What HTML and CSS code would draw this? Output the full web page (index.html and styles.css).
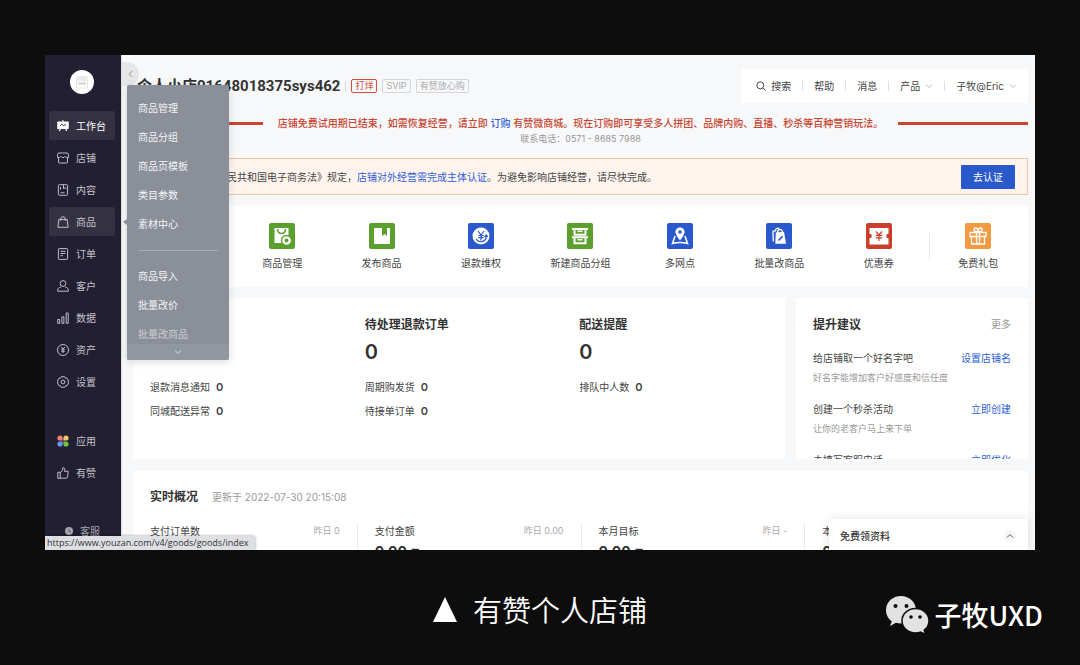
FILE: index.html
```html
<!DOCTYPE html>
<html lang="zh-CN">
<head>
<meta charset="utf-8">
<meta name="viewport" content="width=device-width, initial-scale=1">
<title>有赞个人店铺</title>
<link rel="stylesheet" href="styles.css">
</head>
<body>
<div class="window">
  <aside class="sidebar">
    <div class="logo"><svg width="14" height="14" viewBox="0 0 14 14"><path d="M2 1h10l1.500 5H.5z" fill="#e9e9e9"/><path d="M1.500 6v7h11V6" fill="none" stroke="#e6e6e6"/><path d="M3 7h8v3H3z" fill="#dedede"/></svg></div>
    <nav class="menu">
      <a class="item active" href="#"><svg class="ico" viewBox="0 0 12 12"><path d="M1 1.500h10q.8 0 .8.800v5.900q0 .8-.8.800H1q-.8 0-.8-.8V2.300q0-.8.800-.8z" fill="#fff"/><path d="M6 .3v2M3.500 8.500 2.300 11M8.500 8.500 9.700 11" stroke="#fff" stroke-width="1.300"/><path d="M3 5.800 4.800 4.300l1.600 1.400L9 4.500" stroke="#221f33" stroke-width=".9" fill="none"/></svg>工作台</a>
      <a class="item" href="#"><svg class="ico" viewBox="0 0 12 12"><path d="M.6 5.500V2.200Q.6 1 1.800 1h8.400q1.200 0 1.200 1.200v3.300M.6 5.500h2l1.200-1.200L5 5.500h2l1.200-1.200 1.200 1.200h2M1.500 5.500v4.600q0 .9.900.9h7.200q.9 0 .9-.9V5.500"/></svg>店铺</a>
      <a class="item" href="#"><svg class="ico" viewBox="0 0 12 12"><path d="M2.300.7h7.400q.9 0 .9.900v8.800q0 .9-.9.900H2.300q-.9 0-.9-.9V1.600q0-.9.900-.9zM6.500.7v4l1.600-1 1.500 1M3.500 3v2.500M3.500 8.800h4"/></svg>内容</a>
      <a class="item hover" href="#"><svg class="ico" viewBox="0 0 12 12"><path d="M1.800 3.400h8.400l.9 7.900H.9zM3.700 5V3a2.300 2.300 0 0 1 4.600 0v2"/></svg>商品</a>
      <a class="item" href="#"><svg class="ico" viewBox="0 0 12 12"><path d="M2.100.6h7.800q.7 0 .7.700v9.400q0 .7-.7.700H2.100q-.7 0-.7-.7V1.300q0-.7.7-.7zM3.500 3.300h5M3.500 5.500h5M3.500 7.700H6"/></svg>订单</a>
      <a class="item" href="#"><svg class="ico" viewBox="0 0 12 12"><circle cx="6" cy="3.500" r="2.900"/><path d="M3.800 7.200C1.500 7.400.6 8.700.6 11.200h10.800c0-2.500-.9-3.800-3.200-4"/></svg>客户</a>
      <a class="item" href="#"><svg class="ico" viewBox="0 0 12 12"><path d="M.7 7.400h2v3.900h-2zM4.900 4.800h2v6.500h-2zM9.200 1h2v10.300h-2z"/></svg>数据</a>
      <a class="item" href="#"><svg class="ico" viewBox="0 0 12 12"><circle cx="6" cy="6" r="5.500"/><path d="m4.300 3 1.700 2.400L7.700 3M6 5.400V9M4.300 5.700h3.400M4.300 7.300h3.400"/></svg>资产</a>
      <a class="item" href="#"><svg class="ico" viewBox="0 0 12 12"><path d="M4.300.7h3.400l.7 1.400 1.600.1 1.600 2.900-.5.900.5.900-1.600 2.900-1.600.1-.7 1.400H4.300l-.7-1.400L2 9.800.4 6.900 1 6l-.6-.9L2 2.200l1.600-.1z"/><circle cx="6" cy="6" r="1.900"/></svg>设置</a>
    </nav>
    <nav class="menu extra">
      <a class="item" href="#"><svg class="ico solid" viewBox="0 0 12 12"><path d="M5.600 5.600H3A2.600 2.600 0 1 1 5.600 3z" fill="#f0836f"/><path d="M6.400 5.600V3A2.600 2.600 0 1 1 9 5.600z" fill="#f5c66a"/><path d="M5.600 6.400V9A2.600 2.600 0 1 1 3 6.400z" fill="#6d94f5"/><path d="M6.400 6.400H9A2.600 2.600 0 1 1 6.400 9z" fill="#6cc644"/></svg>应用</a>
      <a class="item" href="#"><svg class="ico" viewBox="0 0 12 12"><path d="M.8 5.300h2.400v6H.8zM3.200 5.500 5.500 3.600 5.800.8c1.700-.5 2.400 1 1.700 3.500h3.700l-.7 6q-.2.900-1.200.9H3.200"/></svg>有赞</a>
    </nav>
    <a class="service" href="#"><svg width="8" height="8" viewBox="0 0 8 8"><circle cx="4" cy="4" r="4" fill="#a5a4ad"/><path d="M4 1.800V4.300h2" fill="none" stroke="#55535f" stroke-width=".8"/></svg>客服</a>
  </aside>

  <main class="main">
    <header class="top">
      <div class="shop">
        <h1>个人小店01648018375sys462</h1>
        <span class="bar"></span>
        <span class="tag red">打烊</span><span class="tag">SVIP</span><span class="tag">有赞放心购</span>
      </div>
      <nav class="tools">
        <a href="#"><svg width="10" height="10" viewBox="0 0 10 10" class="line"><circle cx="4.300" cy="4.300" r="3.500"/><path d="m7 7 2.500 2.500"/></svg>搜索</a>
        <a href="#">帮助</a>
        <a href="#">消息</a>
        <a href="#">产品<svg width="8" height="8" viewBox="0 0 8 8" class="chev"><path d="m1 2.500 3 3 3-3"/></svg></a>
        <a href="#">子牧@Eric<svg width="8" height="8" viewBox="0 0 8 8" class="chev"><path d="m1 2.500 3 3 3-3"/></svg></a>
      </nav>
    </header>

    <section class="expired">
      <p class="notice">店铺免费试用期已结束，如需恢复经营，请立即 <a href="#">订购</a> 有赞微商城。现在订购即可享受多人拼团、品牌内购、直播、秒杀等百种营销玩法。</p>
      <p class="phone">联系电话：0571 - 8685 7988</p>
    </section>

    <section class="verify">
      <p>根据《中华人民共和国电子商务法》规定，<a href="#">店铺对外经营需完成主体认证</a>。为避免影响店铺经营，请尽快完成。</p>
      <button type="button">去认证</button>
    </section>

    <nav class="card shortcuts">
      <a href="#"><svg class="app green" viewBox="0 0 26 26"><path d="M5.500 5h14v15h-14z" fill="#fff"/><path d="M8.500 6c.2 6 7.800 6 8 0" fill="none" stroke="#5b9f2e" stroke-width="1.500"/><circle cx="17.500" cy="17.500" r="5" fill="#fff" stroke="#5b9f2e" stroke-width="1.300"/><circle cx="17.500" cy="17.500" r="1.900" fill="#5b9f2e"/></svg>商品管理</a>
      <a href="#"><svg class="app green" viewBox="0 0 26 26"><path d="M5 5h8v8l2.500-2 2.500 2V5h3v16H5z" fill="#fff"/></svg>发布商品</a>
      <a href="#"><svg class="app blue" viewBox="0 0 26 26"><circle cx="13" cy="13" r="8.500" fill="#fff"/><path d="m10 8 3 4 3-4M13 12v5.500M10.300 12.500h5.400M10.300 14.700h5.400M8 16c2.500 4 8.500 3.500 10-.5l.3-3M16.500 14l1.800-2 1.500 2" fill="none" stroke="#2a59cc" stroke-width="1.200"/></svg>退款维权</a>
      <a href="#"><svg class="app green" viewBox="0 0 26 26"><path d="M5 6h16M5 14.300h16" stroke="#fff" stroke-width="2"/><path d="M7.500 6v5.700h11V6M7.500 14.500v5.800h11v-5.800" fill="none" stroke="#fff" stroke-width="2"/><path d="M10.500 8.300h5M10.500 16.700h5" stroke="#fff" stroke-width="1.500"/></svg>新建商品分组</a>
      <a href="#"><svg class="app blue" viewBox="0 0 26 26"><path d="M13 4.500a4.600 4.600 0 0 0-4.600 4.600c0 3 4.600 8.400 4.600 8.400s4.600-5.400 4.600-8.400A4.600 4.600 0 0 0 13 4.500z" fill="#fff"/><circle cx="13" cy="9" r="1.800" fill="#2a59cc"/><path d="m8 13-2.500 7.500q7.500-2 15 0L18 13" fill="none" stroke="#fff" stroke-width="1.600"/></svg>多网点</a>
      <a href="#"><svg class="app blue" viewBox="0 0 26 26"><path d="m9.800 9.500 8.200-.7 2 12H9.300z" fill="#fff"/><path d="M11.500 10c-.3-4 4.500-5 5-.7M7.300 18.500 7 8.300l2.500-.6c0-2.500 3-3.500 4-1" fill="none" stroke="#fff" stroke-width="1.300"/><path d="m12.500 17.500 4-4.200" stroke="#2a59cc" stroke-width="1.700"/></svg>批量改商品</a>
      <a href="#"><svg class="app crimson" viewBox="0 0 26 26"><path d="M3.500 5h19v5.800a2.300 2.300 0 0 0 0 4.600v6h-19v-6a2.300 2.300 0 0 0 0-4.600z" fill="#fff"/><path d="m10 8.500 3 3.500 3-3.500M13 12v6M9.800 12.300h6.400M9.800 14.800h6.400" fill="none" stroke="#c8402a" stroke-width="1.200"/></svg>优惠券</a>
      <a href="#"><svg class="app orange" viewBox="0 0 26 26"><path d="M5 9.500h16v4H5zM6.500 13.500h13V21h-13zM11.500 9.500V21M14.500 9.500V21M13 9C8 9 8 5 10.500 5 12 5 13 7 13 9zM13 9c5 0 5-4 2.500-4C14 5 13 7 13 9z" fill="none" stroke="#fff" stroke-width="1.300"/></svg>免费礼包</a>
    </nav>

    <div class="row">
      <section class="card orders">
        <div class="col blank"><ul><li>退款消息通知<b>0</b></li><li>同城配送异常<b>0</b></li></ul></div>
        <div class="col"><h2>待处理退款订单</h2><strong>0</strong><ul><li>周期购发货<b>0</b></li><li>待接单订单<b>0</b></li></ul></div>
        <div class="col"><h2>配送提醒</h2><strong>0</strong><ul><li>排队中人数<b>0</b></li></ul></div>
      </section>
      <section class="card tips">
        <div class="tiphead"><h2>提升建议</h2><a href="#">更多</a></div>
        <div class="tip"><div><span>给店铺取一个好名字吧</span><a href="#">设置店铺名</a></div><small>好名字能增加客户好感度和信任度</small></div>
        <div class="tip"><div><span>创建一个秒杀活动</span><a href="#">立即创建</a></div><small>让你的老客户马上来下单</small></div>
        <div class="tip"><div><span>未填写客服电话</span><a href="#">立即优化</a></div></div>
      </section>
    </div>

    <section class="card live">
      <div class="livehead"><h2>实时概况</h2><span>更新于 2022-07-30 20:15:08</span></div>
      <div class="stats">
        <div class="stat"><div><span>支付订单数</span><small>昨日 0</small></div></div>
        <div class="stat"><div><span>支付金额</span><small>昨日 0.00</small></div><strong>0.00 <i>元</i></strong></div>
        <div class="stat"><div><span>本月目标</span><small>昨日 -</small></div><strong>0.00 <i>元</i></strong></div>
        <div class="stat"><div><span>本</span></div><strong>0</strong></div>
      </div>
    </section>

    <button type="button" class="collapse" aria-label="收起"><svg width="8" height="8" viewBox="0 0 8 8"><path d="M5.200 1 2.200 4l3 3"/></svg></button>
    <div class="popover">
      <div class="poplist">
        <a href="#">商品管理</a><a href="#">商品分组</a><a href="#">商品页模板</a><a href="#">类目参数</a><a href="#">素材中心</a>
        <hr>
        <a href="#">商品导入</a><a href="#">批量改价</a><a class="faded" href="#">批量改商品</a>
      </div>
      <button type="button" class="more" aria-label="展开"><svg width="8" height="8" viewBox="0 0 8 8"><path d="m1 2.500 3 3 3-3"/></svg></button>
    </div>
    <div class="float"><span>免费领资料</span><button type="button" aria-label="展开资料"><svg width="8" height="8" viewBox="0 0 8 8"><path d="m1 5.500 3-3 3 3"/></svg></button></div>
  </main>
  <div class="status">https://www.youzan.com/v4/goods/goods/index</div>
</div>
<footer class="caption">
  <p><svg width="24" height="25" viewBox="0 0 24 25"><path d="M12 0 24 25H0z" fill="#fff"/></svg>有赞个人店铺</p>
  <div class="credit">
    <svg width="44" height="40" viewBox="0 0 44 40"><path d="M16 1C7.500 1 1 7.300 1 15c0 4.800 2.300 8.800 5.800 11.300L5 31l6-3.300c1.600.5 3.200.7 5 .7 8.500 0 15-6 15-13.400S24.500 1 16 1z" fill="#e2e2e2"/><path d="M30.500 13.500c-7.800 0-13.500 5.500-13.500 12.200s5.700 12.200 13.500 12.200c1.900 0 3.500-.3 5-.8l5 2.400-1.300-4.400c3-2.200 4.800-5.500 4.800-9.400 0-6.700-5.700-12.200-13.500-12.200z" fill="#e2e2e2" stroke="#0d0d0d" stroke-width="1.500"/><g fill="#0d0d0d"><circle cx="10.500" cy="11" r="2"/><circle cx="21.500" cy="11" r="2"/><circle cx="26" cy="22" r="1.800"/><circle cx="35" cy="22" r="1.800"/></g></svg>
    <span>子牧UXD</span>
  </div>
</footer>
</body>
</html>
```

FILE: styles.css
```css
* { box-sizing: border-box; }
body {
  margin: 0;
  min-height: 100vh;
  padding: 55px 45px 0;
  display: flex;
  flex-direction: column;
  background: #0d0d0d;
  font: 10px/16px Inter, "Noto Sans CJK SC", sans-serif;
  color: #444;
}
a { color: inherit; text-decoration: none; }
h1, h2, p, ul { margin: 0; padding: 0; }
ul { list-style: none; }
button { font: inherit; border: 0; padding: 0; }
svg { flex: none; }

.window {
  flex: 1 1 0;
  min-height: 0;
  display: flex;
  position: relative;
  overflow: hidden;
  background: #f7f8fa;
}

.sidebar {
  flex: none;
  width: 76px;
  padding: 15px 6px 0 4px;
  background: #221f33;
  color: #c4c3ca;
}
.logo {
  width: 24px;
  height: 24px;
  margin: 0 auto 17px;
  display: grid;
  place-items: center;
  border-radius: 50%;
  background: #fff;
}
.menu { display: grid; gap: 3px; }
.item {
  height: 29px;
  padding-left: 8px;
  display: flex;
  align-items: center;
  gap: 7px;
  border-radius: 2px;
}
.item.active { background: #343143; color: #fff; }
.item.hover { background: #343143; }
.ico { width: 12px; height: 12px; fill: none; stroke: #bebdc5; stroke-width: 1; }
.active .ico, .ico.solid { stroke: none; }
.extra { margin-top: 30px; }
.service {
  margin: 36px 0 0 16px;
  display: flex;
  align-items: center;
  gap: 7px;
  color: #a5a4ad;
}

.main {
  flex: 1;
  min-width: 0;
  position: relative;
  padding: 14px 7px 0 11px;
  border-left: 1px solid #dcdde1;
}
.top { display: flex; justify-content: space-between; align-items: center; height: 34px; }
.shop { display: flex; align-items: center; gap: 5px; padding-left: 4px; }
h1 { font: 700 15px/20px Roboto, "Noto Sans CJK SC", sans-serif; color: #333; }
.bar { width: 1px; height: 10px; background: #d8d8d8; }
.tag {
  padding: 0 3px;
  border: 1px solid #d4d5d8;
  border-radius: 2px;
  font-size: 9px;
  line-height: 12px;
  color: #aaa;
}
.tag.red { color: #d0523e; border-color: #d0523e; }
.tools {
  height: 34px;
  display: flex;
  align-items: center;
  padding: 0 3px;
  background: #fff;
}
.tools a { display: flex; align-items: center; gap: 5px; padding: 0 11px; line-height: 10px; }
.tools a + a { border-left: 1px solid #e2e2e2; }
.tools a:last-child { padding-right: 8px; }
.line, .chev { fill: none; stroke: #444; stroke-width: 1; }
.chev { stroke: #bbb; }

.expired { margin-top: 12px; text-align: center; }
.notice { display: flex; align-items: center; white-space: pre; font-weight: 500; color: #c8452f; }
.notice::before, .notice::after { content: ""; flex: 1; height: 3px; background: #c8452f; }
.notice::before { margin-right: 15px; }
.notice::after { margin-left: 15px; }
.notice a, .verify a, .tip a { color: #2f5fd6; }
.phone { font-size: 9px; color: #999; }

.verify {
  height: 37px;
  margin-top: 11px;
  padding: 0 12px 0 33px;
  display: flex;
  align-items: center;
  justify-content: space-between;
  border: 1px solid #efc5a3;
  background: #fef4ed;
}
.verify button { width: 54px; height: 24px; border-radius: 1px; background: #2a59cc; color: #fff; }

.card { background: #fff; }
.shortcuts {
  height: 81px;
  margin-top: 11px;
  display: grid;
  grid-template-columns: repeat(9, 1fr);
  padding-top: 17px;
}
.shortcuts a { display: flex; flex-direction: column; align-items: center; gap: 6px; }
.shortcuts a:first-child { grid-column-start: 2; }
.shortcuts a:last-child {
  background: linear-gradient(#e8e8e8, #e8e8e8) 0 10px / 1px 26px no-repeat;
}
.app { width: 26px; height: 26px; border-radius: 2px; }
.green { background: #5b9f2e; }
.blue { background: #2a59cc; }
.crimson { background: #c8402a; }
.orange { background: #f29a42; }

.row {
  display: grid;
  grid-template-columns: minmax(0, 652fr) minmax(0, 232fr);
  gap: 11px;
  margin-top: 11px;
  height: 161px;
}
h2 { font-size: 12px; line-height: 18px; font-weight: 600; color: #333; }
.orders {
  display: grid;
  grid-template-columns: repeat(3, 1fr);
  padding: 18px 8px 0 0;
}
.col { padding-left: 17px; }
.col strong { display: block; margin: 6px 0 11px; font-size: 20px; line-height: 24px; font-weight: 600; color: #333; }
.col li { height: 24px; line-height: 24px; }
.col b { margin-left: 6px; font-size: 11px; font-weight: 600; }
.blank { padding-top: 59px; }
.tips { padding: 18px 17px 0; overflow: hidden; }
.tiphead, .tip > div { display: flex; justify-content: space-between; }
.tiphead { margin-bottom: 16px; color: #999; }
.tip { height: 51px; }
.tip small { display: block; margin-top: 4px; font-size: 9px; color: #999; }

.live { height: 161px; margin-top: 12px; padding-top: 17px; }
.livehead { display: flex; align-items: center; gap: 14px; padding-left: 17px; color: #999; }
.stats { margin-top: 17px; display: grid; grid-template-columns: repeat(4, 1fr); }
.stat { height: 60px; padding: 0 17px; }
.stat + .stat { border-left: 1px solid #ebebeb; }
.stat > div { display: flex; justify-content: space-between; }
.stat small { font-size: 9px; color: #aaa; }
.stat strong { display: block; margin-top: 3px; font-size: 14px; line-height: 20px; color: #333; }
.stat i { font-size: 10px; font-style: normal; }

.collapse {
  position: absolute;
  left: 0;
  top: 7px;
  width: 17px;
  height: 24px;
  border-radius: 0 12px 12px 0;
  background: #e5e6e8;
}
.collapse svg, .more svg, .float svg { display: block; margin: auto; fill: none; stroke: #999; }
.popover {
  position: absolute;
  left: 5px;
  top: 30px;
  width: 102px;
  border-radius: 2px;
  background: #8a8f99;
  color: #f3f4f5;
  box-shadow: 0 2px 8px rgba(0, 0, 0, .15);
}
.popover::before {
  content: "";
  position: absolute;
  left: -4px;
  top: 134px;
  border: 3px solid transparent;
  border-left: 0;
  border-right: 4px solid #8a8f99;
}
.poplist { height: 259px; padding: 9px 11px 0; overflow: hidden; }
.poplist a { display: block; height: 29px; line-height: 29px; }
.poplist hr { margin: 11px 0; border: 0; border-top: 1px solid #a7abb2; }
.poplist .faded { opacity: .6; }
.more { display: block; width: 100%; height: 16px; border-radius: 0 0 2px 2px; background: #92969f; }
.more svg { stroke: #ddd; }
.float {
  position: absolute;
  right: 7px;
  bottom: 0;
  width: 199px;
  height: 31px;
  padding: 2px 12px 0 11px;
  display: flex;
  align-items: center;
  justify-content: space-between;
  background: #fff;
  box-shadow: 0 0 10px rgba(0, 0, 0, .12);
  font-weight: 500;
  color: #333;
}
.float button { width: 12px; height: 12px; border-radius: 50%; background: #f6f6f6; }
.float svg { stroke: #555; }
.status {
  position: absolute;
  left: 0;
  bottom: 0;
  padding: 0 6px 0 2px;
  border-radius: 0 3px 0 0;
  background: #dedfe3;
  box-shadow: 0 0 3px rgba(0, 0, 0, .4);
  font: 9px/14px "Open Sans", sans-serif;
  color: #333;
}

.caption {
  height: 115px;
  display: grid;
  grid-template-columns: 1fr auto 1fr;
  align-items: center;
  color: #fff;
}
.caption p {
  grid-column: 2;
  display: flex;
  align-items: center;
  gap: 16px;
  padding-top: 3px;
  font: 350 29px/40px "Noto Sans CJK SC", sans-serif;
}
.credit {
  justify-self: end;
  display: flex;
  align-items: center;
  gap: 6px;
  margin-right: -8px;
  padding-top: 14px;
  font: 500 27px/36px "Noto Sans CJK SC", sans-serif;
}
```
